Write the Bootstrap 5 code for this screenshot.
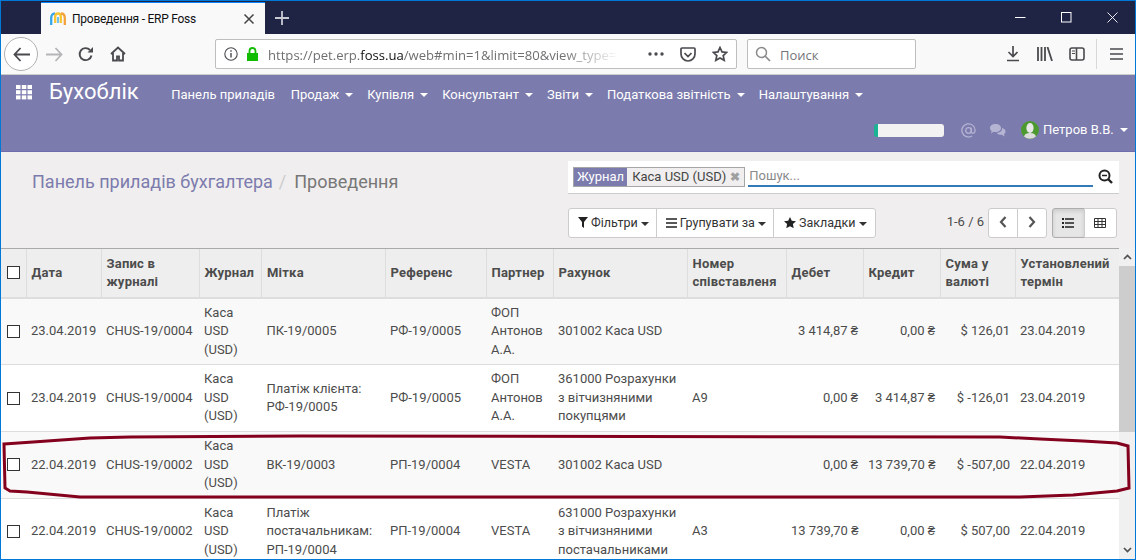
<!DOCTYPE html>
<html lang="uk"><head><meta charset="utf-8"><title>Проведення - ERP Foss</title>
<link href="https://cdn.jsdelivr.net/npm/bootstrap@5.3.0/dist/css/bootstrap.min.css" rel="stylesheet">
<style>
html,body{height:560px;overflow:hidden;margin:0;background:#fff}
body{font-family:Roboto,"Liberation Sans",sans-serif;font-size:13px;color:#4c4c4c;line-height:1.42857}
.win{height:560px;width:1136px;border:1px solid #0078d7;position:relative;overflow:hidden}
.tabstrip{height:33px;background:#1f2344;padding-left:40px}
.tabx{width:224px;height:33px;margin-top:1px;background:#f9f9fa;border-top:1px solid #0a84ff;font:12px Roboto,"Noto Sans",sans-serif;letter-spacing:-.25px;color:#111;padding:0 10px 0 9px}
.tablogo{margin-right:6px}
.newtab{width:34px;color:#c8c9d2}
.winbtns{gap:0;margin-left:auto}
.winbtn{width:46px;height:33px}
.toolbar{height:41px;background:#f9f9fa;border-bottom:1px solid #ccc;padding:0 0 0 3px}
.tb{width:32px;height:33px}
.tbback{width:34px;height:34px;border:1px solid #b1b1b3;border-radius:50%;background:#fff}
.urlbox{width:522px;height:30px;margin-left:81px;background:#fff;border:1px solid #bebebe;border-radius:2px;font:13.1px "Open Sans","Noto Sans",sans-serif;color:#6f6f72;position:relative}
.urltxt{width:358px;margin-left:9px;padding-top:1px;white-space:nowrap;-webkit-mask-image:linear-gradient(90deg,#000 82%,transparent 98%);mask-image:linear-gradient(90deg,#000 82%,transparent 98%)}
.urltxt b{font-weight:400;color:#111}
.findbox{width:169px;height:30px;margin-left:10px;background:#fff;border:1px solid #bebebe;border-radius:2px;font:13px "Open Sans","Noto Sans",sans-serif;color:#75757a;padding-left:7px;gap:9px}
.findtxt{padding-top:1px}
.tbright{margin-left:auto;gap:0;padding-right:2px}
.tbsep{width:1px;height:30px;background:#d8d8d8;margin:0 3px}
.tbmenu{width:33px}
.oenav{height:76px;background:#7c7bad;color:#fff;padding:0;display:block}
.oerow1{height:37px}
.apps{width:16px;height:16px;margin:-4px 0 0 15px}
.brandx{font-size:22px;line-height:30px;margin:-4px 25px 0 17px;color:#fff;padding:0}
.oelink{color:#fff;text-decoration:none;padding:0 8.25px 0 7.5px;white-space:nowrap;line-height:18px;margin-top:2px}
.caretx{display:inline-block;border-top:4px solid;border-left:4px solid transparent;border-right:4px solid transparent;margin-left:3px;vertical-align:middle}
.oelink .caretx{margin-right:-2px}
.oerow2{height:36px;padding-right:7px;gap:0}
.prog{width:70px;height:13px;background:#f2f2f2;border-radius:3px;border-left:4px solid #1ab394;margin-right:17px}
.iconmute{margin-right:13px}
.avatar{width:18px;height:18px;margin:0 4px 0 15px}
.cpanel{height:97px;background:#f0eeee;border-top:1px solid #6e6cb0;padding:0 16px 0 31px}
.crumbs{font-size:18px;line-height:24px;margin-top:18px;color:#777}
.crumbs a{color:#7c7bad;text-decoration:none}
.crumbs i{font-style:normal;color:#ccc;padding:0 8px 0 6px}
.cright{width:551px}
.srch{height:33px;margin-top:9px;background:#fff;border-bottom:1px solid #ccc;padding:6px 6px 0 5px}
.facet{height:20px;border:1px solid #a6a6a6;line-height:18px}
.facetl{background:#7c7bad;color:#fff;padding:0 3px}
.facetv{padding:0 4px 0 5px;background:#f0eeee;color:#444}
.facetx{color:#a0a0a0;font-size:12px;font-weight:700;margin-left:4px}
.sinput{height:20px;margin-left:3px;width:346px;border:0;border-bottom:2px solid #337ab7;outline:0;padding:0 1px 2px;background:transparent;font-size:13px;color:#777;line-height:16px}
.sinput::placeholder{color:#8a8a8a}
.sglass{margin:2px 0 0 5px}
.cbottom{margin-top:14px}
.cbtn{background:#fff;border:1px solid #ccc;color:#333;font-size:12.5px;height:30px;padding:0 7px 0 10px;line-height:28px;border-radius:3px;white-space:nowrap}
.cbtn:hover{background:#fff;border-color:#ccc;color:#333}
.cbtn svg{vertical-align:-1px}
.cgroup{padding:0 7px 0 9px}
.cgroup.clast{padding:0 8px 0 10px}
.pagerx{margin-left:71px;margin-right:4px;line-height:28px;color:#4c4c4c;font-size:13px;white-space:nowrap;width:37px;flex-shrink:0;align-self:flex-start}
.navb{width:30px;padding:0;text-align:center}
.viewb{width:33px;padding:0;text-align:center}
.viewb.on{background:#e6e6e6;border-color:#adadad;box-shadow:inset 0 2px 4px rgba(0,0,0,.125)}
.views{margin-left:5px}
.lst{height:311px}
.lstmain{width:1118px;overflow:hidden}
.tbl{table-layout:fixed;width:1118px;margin:0;color:#4c4c4c;font-size:13px;line-height:18.6px;border-collapse:collapse}
.tbl th{background:#eee;font-weight:700;padding:5.75px 5px;border-top:1px solid #aaa;border-bottom:2px solid #ddd;border-left:1px solid #ddd;vertical-align:middle;height:47px;line-height:18px;color:#4c4c4c;letter-spacing:.22px}
.tbl th:first-child{border-left:0}
.tbl td{padding:5px;border:0;border-top:1px solid #ddd;vertical-align:middle;background:transparent;box-shadow:none;color:#4c4c4c}
.tbl tr.oddr td{background:#f9f9f9}
.tbl .rt{text-align:right}
.tbl .nw{white-space:nowrap}
.c0{width:25px}.c1{width:75px}.c2{width:98px}.c3{width:62.5px}.c4{width:123.5px}.c5{width:101px}.c6{width:67px}.c7{width:134px}.c8{width:99px}.c9{width:77px}.c10{width:77px}.c11{width:75px}.c12{width:104px}
.cb{display:block;width:13px;height:13px;border:1px solid #333;background:#fff;margin:0 0 0 1px}
.sbar{width:16px;background:#f0f0f0;height:311px}
.sbup{height:18px}
.sbthumb{height:166px;background:#cdcdcd}
.sbfill{flex:1}
.sbdn{height:18px}
.redmark{position:absolute;left:-1px;top:-1px;width:1136px;height:560px;pointer-events:none}
</style></head>
<body>
<div class="win d-flex flex-column">
  <div class="tabstrip d-flex align-items-stretch flex-shrink-0">
    <div class="tabx d-flex align-items-center">
      <svg width="16" height="14" viewBox="0 0 16 14" class="tablogo flex-shrink-0"><path d="M1.200 13V6C1.200 3 2.500 1.500 5 1.500" fill="none" stroke="#3aa6ea" stroke-width="2.300"/><path d="M5.200 11V4.500C5.200 2.500 6 1.500 8 1.500" fill="none" stroke="#f7c531" stroke-width="2.300"/><path d="M8 1.500C10 1.500 10.800 2.500 10.800 4.500V11" fill="none" stroke="#f7c531" stroke-width="2.300"/><path d="M8 11V5" fill="none" stroke="#5fbdf0" stroke-width="1.800"/><path d="M11 1.500C13.500 1.500 14.800 3 14.800 6V13" fill="none" stroke="#f4a13b" stroke-width="2.300"/></svg>
      <span class="flex-grow-1">Проведення - ERP Foss</span>
      <svg width="12" height="12" viewBox="0 0 12 12"><path d="M1.500 1.500l9 9M10.500 1.500l-9 9" stroke="#444" stroke-width="1.500"/></svg>
    </div>
    <div class="newtab d-flex align-items-center justify-content-center"><svg width="14" height="14" viewBox="0 0 14 14"><path d="M7 0v14M0 7h14" stroke="#c8c9d2" stroke-width="1.800"/></svg></div>
    <div class="winbtns d-flex">
      <div class="winbtn d-flex align-items-center justify-content-center"><svg width="11" height="11" viewBox="0 0 11 11"><path d="M0 5.500h10.500" stroke="#fff"/></svg></div>
      <div class="winbtn d-flex align-items-center justify-content-center"><svg width="11" height="11" viewBox="0 0 11 11"><rect x=".5" y=".5" width="9.500" height="9.500" fill="none" stroke="#fff"/></svg></div>
      <div class="winbtn d-flex align-items-center justify-content-center"><svg width="11" height="11" viewBox="0 0 11 11"><path d="M.5.500l10 10M10.500.500l-10 10" stroke="#fff" stroke-width=".9"/></svg></div>
    </div>
  </div>
  <div class="toolbar d-flex align-items-center flex-shrink-0">
    <div class="tbback d-flex align-items-center justify-content-center flex-shrink-0"><svg width="17" height="15" viewBox="0 0 17 15"><path d="M7.500 1L1.500 7.500 7.500 14M2 7.500h15" fill="none" stroke="#4a4a4f" stroke-width="1.800"/></svg></div>
    <div class="tb d-flex align-items-center justify-content-center flex-shrink-0"><svg width="17" height="15" viewBox="0 0 17 15"><path d="M9.500 1l6 6.500-6 6.500M0 7.500h15" fill="none" stroke="#b5b5b8" stroke-width="1.800"/></svg></div>
    <div class="tb d-flex align-items-center justify-content-center flex-shrink-0"><svg width="16" height="16" viewBox="0 0 16 16"><path d="M13.500 9.500A6 6 0 1 1 12 4" fill="none" stroke="#4a4a4f" stroke-width="1.900"/><path d="M15 1v5.500H9.500z" fill="#4a4a4f"/></svg></div>
    <div class="tb d-flex align-items-center justify-content-center flex-shrink-0"><svg width="16" height="16" viewBox="0 0 16 16"><path d="M1 8L8 1.500 15 8M3 7v7.500h4v-4h2v4h4V7" fill="none" stroke="#4a4a4f" stroke-width="1.800"/></svg></div>
    <div class="urlbox d-flex align-items-center flex-shrink-0">
      <svg width="14" height="14" viewBox="0 0 14 14" class="ms-2 flex-shrink-0"><circle cx="7" cy="7" r="6.200" fill="none" stroke="#4a4a4f" stroke-width="1.100"/><path d="M7 6v4.500M7 3.200v1.500" stroke="#4a4a4f" stroke-width="1.400"/></svg>
      <svg width="13" height="14" viewBox="0 0 13 14" class="ms-2 flex-shrink-0"><path d="M1 6h11v8H1z" fill="#12bc00"/><path d="M3.500 6V4a3 3 0 0 1 6 0v2" fill="none" stroke="#12bc00" stroke-width="1.800"/></svg>
      <div class="urltxt">https://pet.erp.<b>foss.ua</b>/web#min=1&amp;limit=80&amp;view_type=</div>
      <div class="d-flex align-items-center ms-auto me-2 gap-3">
        <svg width="16" height="4" viewBox="0 0 16 4"><circle cx="2" cy="2" r="1.700" fill="#4a4a4f"/><circle cx="8" cy="2" r="1.700" fill="#4a4a4f"/><circle cx="14" cy="2" r="1.700" fill="#4a4a4f"/></svg>
        <svg width="16" height="15" viewBox="0 0 16 15"><path d="M2 1h12a1 1 0 0 1 1 1v5a7 7 0 0 1-14 0V2a1 1 0 0 1 1-1zM4.500 6L8 9.500 11.500 6" fill="none" stroke="#4a4a4f" stroke-width="1.700"/></svg>
        <svg width="16" height="16" viewBox="0 0 16 16"><path d="M8 1.500l2 4.400 4.700.5-3.500 3.200 1 4.700L8 11.900l-4.200 2.400 1-4.700L1.300 6.400 6 5.900z" fill="none" stroke="#4a4a4f" stroke-width="1.700"/></svg>
      </div>
    </div>
    <div class="findbox d-flex align-items-center flex-shrink-0">
      <svg width="16" height="16" viewBox="0 0 16 16" class="flex-shrink-0"><circle cx="6.500" cy="6.500" r="5" fill="none" stroke="#8a8a8d" stroke-width="1.500"/><path d="M10 10l5 5" stroke="#8a8a8d" stroke-width="1.700"/></svg>
      <span class="findtxt">Поиск</span>
    </div>
    <div class="tbright d-flex align-items-center">
      <div class="tb d-flex align-items-center justify-content-center"><svg width="14" height="16" viewBox="0 0 14 16"><path d="M7 0v10M2.500 6L7 10.500 11.500 6M1 14.500h12" fill="none" stroke="#4a4a4f" stroke-width="1.700"/></svg></div>
      <div class="tb d-flex align-items-center justify-content-center"><svg width="16" height="14" viewBox="0 0 16 14"><path d="M1 0v14M4.500 0v14M8 0v14M10.500 0l4.500 14" fill="none" stroke="#4a4a4f" stroke-width="1.800"/></svg></div>
      <div class="tb d-flex align-items-center justify-content-center"><svg width="16" height="14" viewBox="0 0 16 14"><rect x="1" y="1" width="14" height="12" rx="2" fill="none" stroke="#4a4a4f" stroke-width="1.600"/><path d="M7.500 1v12" stroke="#4a4a4f" stroke-width="1.600"/><path d="M3 4h3M3 6.500h3" stroke="#4a4a4f"/></svg></div>
      <div class="tbsep"></div>
      <div class="tb tbmenu d-flex align-items-center justify-content-center"><svg width="13" height="12" viewBox="0 0 13 12"><path d="M0 1h13M0 6h13M0 11h13" stroke="#4a4a4f" stroke-width="1.700"/></svg></div>
    </div>
  </div>
  <nav class="oenav navbar flex-shrink-0">
    <div class="oerow1 d-flex align-items-center">
      <svg class="apps flex-shrink-0" viewBox="0 0 16 16"><g fill="#fff"><rect x="0" y="1" width="4.500" height="4"/><rect x="5.800" y="1" width="4.500" height="4"/><rect x="11.500" y="1" width="4.500" height="4"/><rect x="0" y="6.200" width="4.500" height="4"/><rect x="5.800" y="6.200" width="4.500" height="4"/><rect x="11.500" y="6.200" width="4.500" height="4"/><rect x="0" y="11.400" width="4.500" height="4"/><rect x="5.800" y="11.400" width="4.500" height="4"/><rect x="11.500" y="11.400" width="4.500" height="4"/></g></svg>
      <a class="brandx navbar-brand" href="#">Бухоблік</a>
      <a class="oelink" href="#">Панель приладів</a>
      <a class="oelink" href="#">Продаж <span class="caretx"></span></a>
      <a class="oelink" href="#">Купівля <span class="caretx"></span></a>
      <a class="oelink" href="#">Консультант <span class="caretx"></span></a>
      <a class="oelink" href="#">Звіти <span class="caretx"></span></a>
      <a class="oelink" href="#">Податкова звітність <span class="caretx"></span></a>
      <a class="oelink" href="#">Налаштування <span class="caretx"></span></a>
    </div>
    <div class="oerow2 d-flex align-items-center justify-content-end">
      <div class="prog"></div>
      <svg class="iconmute" width="15" height="15" viewBox="0 0 15 15"><circle cx="7.500" cy="7.500" r="2.800" fill="none" stroke="#b5b4d3" stroke-width="1.300"/><path d="M10.300 4.700v4.200c0 2 3.800 2 3.800-1.400A6.600 6.600 0 1 0 11 13" fill="none" stroke="#b5b4d3" stroke-width="1.300"/></svg>
      <svg width="17" height="15" viewBox="0 0 17 15"><path d="M1 5c0-2.500 2.500-4 5.500-4s5.500 1.500 5.500 4-2.500 4-5.500 4c-.7 0-1.300-.1-2-.2L2 10.500l.7-2.500C1.600 7.300 1 6.300 1 5z" fill="#b5b4d3"/><path d="M13 5c2 .4 3.500 1.800 3.500 3.500 0 1-.5 2-1.500 2.500l.5 2.500-2.700-1.700c-2 .2-4.300-.5-5.300-2 3.500 0 6-2 5.500-4.800z" fill="#b5b4d3"/></svg>
      <svg class="avatar" viewBox="0 0 18 18"><circle cx="9" cy="9" r="9" fill="#4c9a2f"/><ellipse cx="9" cy="7" rx="3.600" ry="5" fill="#e8e8e8"/><path d="M3 15.500c1-3 3.500-3.500 6-3.500s5 .5 6 3.500a9 9 0 0 1-12 0z" fill="#dcdcdc"/></svg>
      <span>Петров В.В. <span class="caretx"></span></span>
    </div>
  </nav>
  <div class="cpanel d-flex justify-content-between flex-shrink-0">
    <div class="crumbs"><a href="#">Панель приладів бухгалтера</a><i>/</i>Проведення</div>
    <div class="cright">
      <div class="srch d-flex">
        <div class="facet d-flex flex-shrink-0"><span class="facetl">Журнал</span><span class="facetv">Каса USD (USD)<span class="facetx">✖</span></span></div>
        <input class="sinput" type="text" placeholder="Пошук...">
        <svg class="sglass flex-shrink-0" width="15" height="15" viewBox="0 0 15 15"><circle cx="6.500" cy="6.500" r="5" fill="none" stroke="#222" stroke-width="2"/><path d="M4 6.500h5" stroke="#222" stroke-width="1.500"/><path d="M10 10l4 4" stroke="#222" stroke-width="2.400"/></svg>
      </div>
      <div class="cbottom d-flex align-items-center">
        <div class="btn-group">
          <button class="btn cbtn cgroup" type="button"><svg width="10" height="11" viewBox="0 0 10 11"><path d="M0 0h10L6 5v6L4 9.500V5z" fill="#222"/></svg> Фільтри <span class="caretx ms-0"></span></button>
          <button class="btn cbtn cgroup" type="button"><svg width="11" height="10" viewBox="0 0 11 10"><path d="M0 1h11M0 5h11M0 9h11" stroke="#222" stroke-width="1.600"/></svg> Групувати за <span class="caretx ms-0"></span></button>
          <button class="btn cbtn cgroup clast" type="button"><svg width="12" height="11" viewBox="0 0 12 11"><path d="M6 0l1.800 3.800 4.200.5-3.100 2.800.8 4.100L6 9.200l-3.700 2 .8-4.100L0 4.300l4.200-.5z" fill="#222"/></svg> Закладки <span class="caretx ms-0"></span></button>
        </div>
        <span class="pagerx">1-6 / 6</span>
        <div class="btn-group">
          <button class="btn cbtn navb" type="button"><svg width="8" height="12" viewBox="0 0 8 12"><path d="M6.500 1L2 6l4.500 5" fill="none" stroke="#555" stroke-width="2.200"/></svg></button>
          <button class="btn cbtn navb" type="button"><svg width="8" height="12" viewBox="0 0 8 12"><path d="M1.500 1L6 6l-4.500 5" fill="none" stroke="#555" stroke-width="2.200"/></svg></button>
        </div>
        <div class="btn-group views">
          <button class="btn cbtn viewb on" type="button"><svg width="12" height="10" viewBox="0 0 12 10"><path d="M3 1h9M3 5h9M3 9h9" stroke="#222" stroke-width="1.500"/><path d="M0 1h2M0 5h2M0 9h2" stroke="#222" stroke-width="1.800"/></svg></button>
          <button class="btn cbtn viewb" type="button"><svg width="12" height="10" viewBox="0 0 12 10"><path d="M.5.500h11v9H.5zM.5 3.500h11M.5 6.500h11M4 .5v9M8 .5v9" fill="none" stroke="#333"/></svg></button>
        </div>
      </div>
    </div>
  </div>
  <div class="lst d-flex flex-shrink-0">
    <div class="lstmain">
      <table class="table tbl">
        <colgroup><col class="c0"><col class="c1"><col class="c2"><col class="c3"><col class="c4"><col class="c5"><col class="c6"><col class="c7"><col class="c8"><col class="c9"><col class="c10"><col class="c11"><col class="c12"></colgroup>
        <thead><tr><th><span class="cb"></span></th><th>Дата</th><th>Запис в журналі</th><th>Журнал</th><th>Мітка</th><th>Референс</th><th>Партнер</th><th>Рахунок</th><th>Номер співставленя</th><th>Дебет</th><th>Кредит</th><th>Сума у валюті</th><th>Установлений термін</th></tr></thead>
        <tbody>
          <tr class="oddr"><td><span class="cb"></span></td><td class="nw">23.04.2019</td><td class="nw">CHUS-19/0004</td><td>Каса USD (USD)</td><td>ПК-19/0005</td><td>РФ-19/0005</td><td>ФОП Антонов А.А.</td><td>301002 Каса USD</td><td></td><td class="rt nw">3 414,87 ₴</td><td class="rt nw">0,00 ₴</td><td class="rt nw">$ 126,01</td><td>23.04.2019</td></tr>
          <tr><td><span class="cb"></span></td><td class="nw">23.04.2019</td><td class="nw">CHUS-19/0004</td><td>Каса USD (USD)</td><td>Платіж клієнта: РФ-19/0005</td><td>РФ-19/0005</td><td>ФОП Антонов А.А.</td><td>361000 Розрахунки з вітчизняними покупцями</td><td>A9</td><td class="rt nw">0,00 ₴</td><td class="rt nw">3 414,87 ₴</td><td class="rt nw">$ -126,01</td><td>23.04.2019</td></tr>
          <tr class="oddr"><td><span class="cb"></span></td><td class="nw">22.04.2019</td><td class="nw">CHUS-19/0002</td><td>Каса USD (USD)</td><td>ВК-19/0003</td><td>РП-19/0004</td><td>VESTA</td><td>301002 Каса USD</td><td></td><td class="rt nw">0,00 ₴</td><td class="rt nw">13 739,70 ₴</td><td class="rt nw">$ -507,00</td><td>22.04.2019</td></tr>
          <tr><td><span class="cb"></span></td><td class="nw">22.04.2019</td><td class="nw">CHUS-19/0002</td><td>Каса USD (USD)</td><td>Платіж постачальникам: РП-19/0004</td><td>РП-19/0004</td><td>VESTA</td><td>631000 Розрахунки з вітчизняними постачальниками</td><td>A3</td><td class="rt nw">13 739,70 ₴</td><td class="rt nw">0,00 ₴</td><td class="rt nw">$ 507,00</td><td>22.04.2019</td></tr>
        </tbody>
      </table>
    </div>
    <div class="sbar d-flex flex-column flex-shrink-0">
      <div class="sbup d-flex align-items-center justify-content-center"><svg width="9" height="6" viewBox="0 0 9 6"><path d="M1 5l3.500-3.500L8 5" fill="none" stroke="#505050" stroke-width="1.700"/></svg></div>
      <div class="sbthumb"></div>
      <div class="sbfill"></div>
      <div class="sbdn d-flex align-items-center justify-content-center"><svg width="9" height="6" viewBox="0 0 9 6"><path d="M1 1l3.500 3.500L8 1" fill="none" stroke="#505050" stroke-width="1.700"/></svg></div>
    </div>
  </div>
  <svg class="redmark" viewBox="0 0 1136 560"><path d="M4 444L33 442 90 438 130 437 300 436 1000 437 1040 439 1083 441 1117 443 1128 446 1129 488 1117 491 1073 495 1020 497 110 497 80 497 27 492 10 491 5 488Z" fill="none" stroke="#84011e" stroke-width="3"/></svg>
</div>
<script src="https://cdn.jsdelivr.net/npm/bootstrap@5.3.0/dist/js/bootstrap.bundle.min.js"></script>
</body></html>
